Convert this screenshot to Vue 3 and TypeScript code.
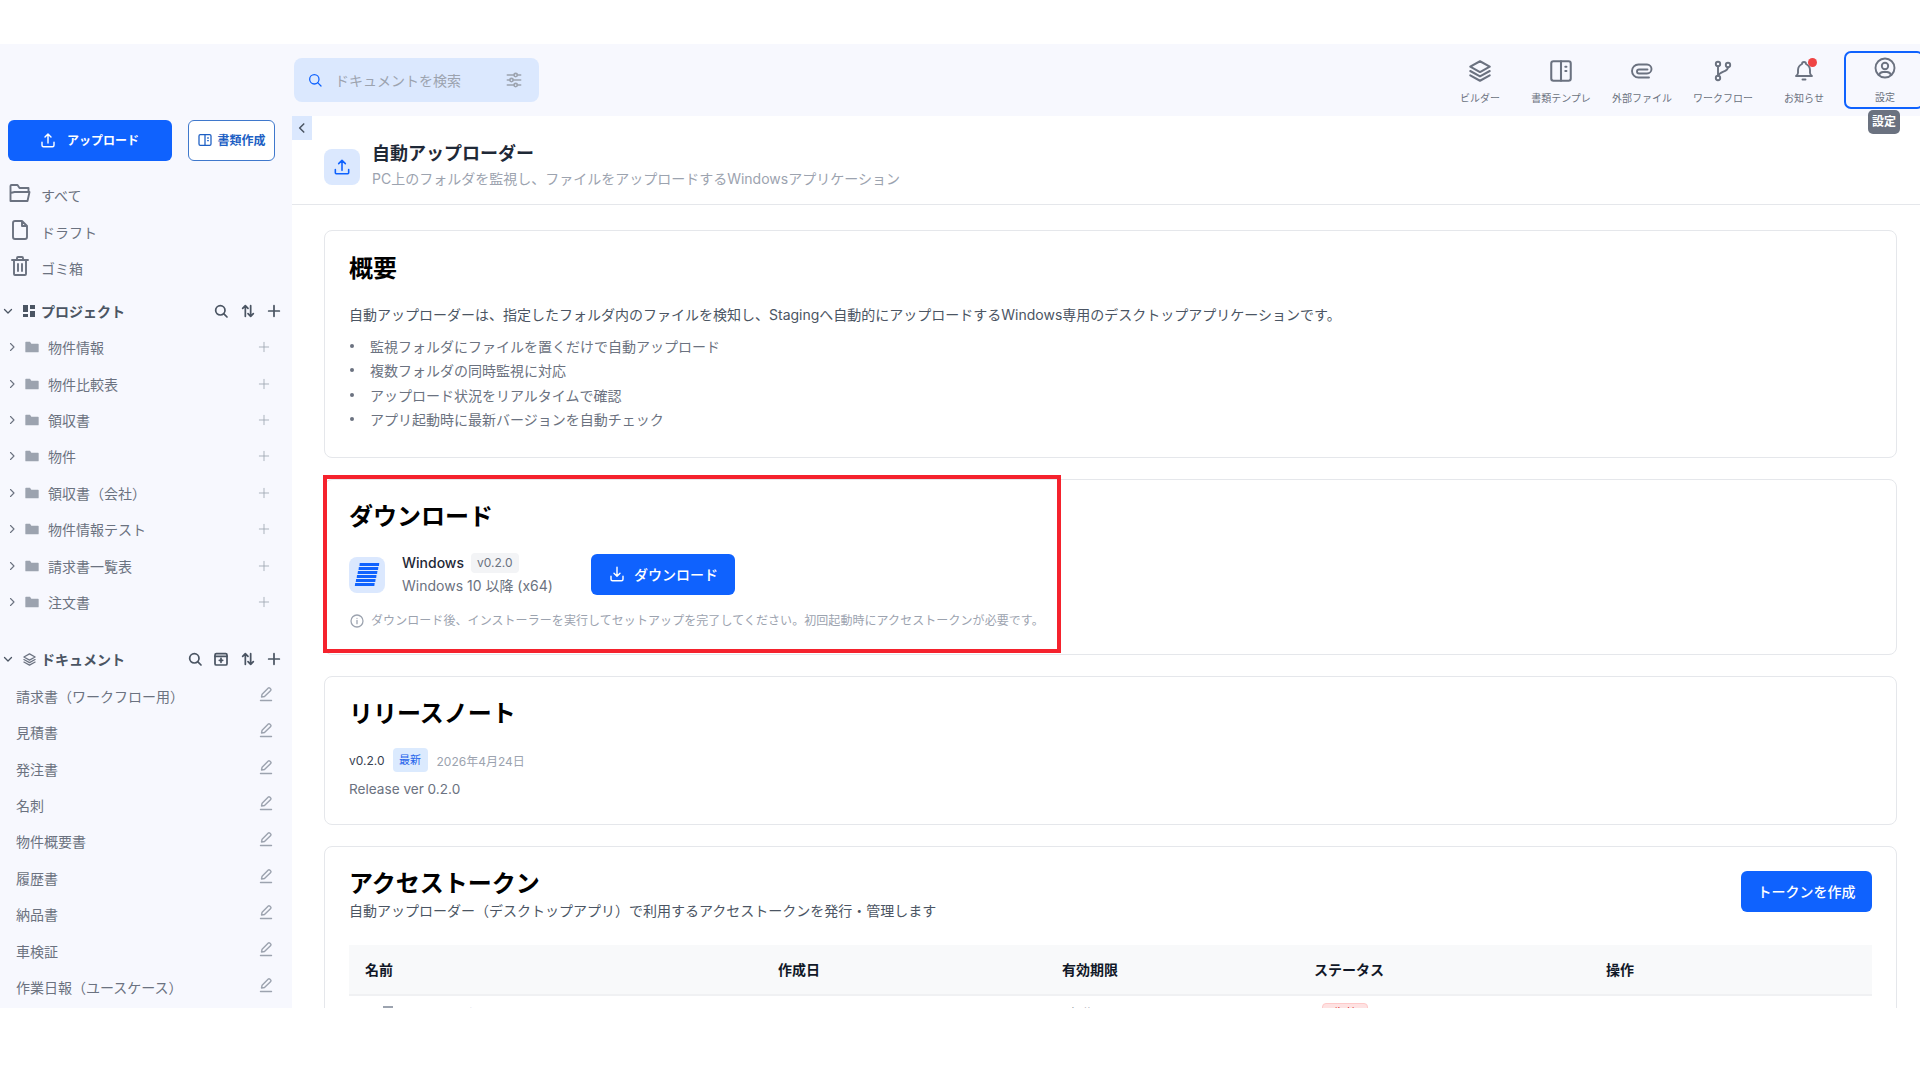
<script setup lang="ts">
const projects = ['物件情報', '物件比較表', '領収書', '物件', '領収書（会社）', '物件情報テスト', '請求書一覧表', '注文書']
const documents = ['請求書（ワークフロー用）', '見積書', '発注書', '名刺', '物件概要書', '履歴書', '納品書', '車検証', '作業日報（ユースケース）']
const features = [
  '監視フォルダにファイルを置くだけで自動アップロード',
  '複数フォルダの同時監視に対応',
  'アップロード状況をリアルタイムで確認',
  'アプリ起動時に最新バージョンを自動チェック',
]
const stripes = [0, 1, 2, 3, 4, 5]
</script>

<template>
  <div class="frame">
    <div class="app">
      <aside class="sidebar">
        <div class="actions">
          <button class="btn primary upload">
            <svg width="18" height="18" viewBox="0 0 24 24" class="ic"><path d="M4 15v4a2 2 0 0 0 2 2h12a2 2 0 0 0 2-2v-4M8 8l4-4 4 4M12 4v12" /></svg>
            アップロード
          </button>
          <button class="btn outline">
            <svg width="16" height="16" viewBox="0 0 24 24" class="ic"><rect x="3" y="4" width="18" height="16" rx="2" /><path d="M12 4v16M16 9h1M16 13h1" /></svg>
            書類作成
          </button>
        </div>

        <nav class="quick">
          <div class="quick-row">
            <svg width="24" height="24" viewBox="0 0 24 24" class="ic"><path d="M2.500 20V5a1 1 0 0 1 1-1h6l2 3h9v4M2.500 20h17l2-9H6.500L2.500 12" /></svg>
            <span>すべて</span>
          </div>
          <div class="quick-row">
            <svg width="24" height="24" viewBox="0 0 24 24" class="ic"><path d="M14 3v5h5M14 3H7a2 2 0 0 0-2 2v14a2 2 0 0 0 2 2h10a2 2 0 0 0 2-2V8z" /></svg>
            <span>ドラフト</span>
          </div>
          <div class="quick-row">
            <svg width="24" height="24" viewBox="0 0 24 24" class="ic"><path d="M4 6h16M9 6V4a1 1 0 0 1 1-1h4a1 1 0 0 1 1 1v2M6 6v14a1 1 0 0 0 1 1h10a1 1 0 0 0 1-1V6M10 10v7M14 10v7" /></svg>
            <span>ゴミ箱</span>
          </div>
        </nav>

        <div class="section-head projects">
          <svg width="12" height="12" viewBox="0 0 24 24" class="ic thick chev"><path d="M5 9l7 7 7-7" /></svg>
          <svg width="14" height="14" viewBox="0 0 14 14" class="solid"><rect x="1" y="1" width="5" height="7" /><rect x="8" y="1" width="5" height="4" /><rect x="1" y="10" width="5" height="3" /><rect x="8" y="7" width="5" height="6" /></svg>
          <span class="section-title">プロジェクト</span>
          <div class="tools">
            <svg width="16" height="16" viewBox="0 0 24 24" class="ic thick"><circle cx="11" cy="11" r="7" /><path d="M21 21l-5-5" /></svg>
            <svg width="16" height="16" viewBox="0 0 24 24" class="ic thick"><path d="M8 20V4M4 8l4-4 4 4M16 4v16M12 16l4 4 4-4" /></svg>
            <svg width="16" height="16" viewBox="0 0 24 24" class="ic thick"><path d="M12 4v16M4 12h16" /></svg>
          </div>
        </div>
        <div v-for="p in projects" :key="p" class="folder-row">
          <svg width="12" height="12" viewBox="0 0 24 24" class="ic thick chev-r"><path d="M9 5l7 7-7 7" /></svg>
          <svg width="16" height="16" viewBox="0 0 24 24" class="folder"><path d="M2 5a1 1 0 0 1 1-1h6l2 3h10a1 1 0 0 1 1 1v11a1 1 0 0 1-1 1H3a1 1 0 0 1-1-1z" /></svg>
          <span class="row-label">{{ p }}</span>
          <svg width="14" height="14" viewBox="0 0 24 24" class="ic light"><path d="M12 4v16M4 12h16" /></svg>
        </div>

        <div class="section-head documents">
          <svg width="12" height="12" viewBox="0 0 24 24" class="ic thick chev"><path d="M5 9l7 7 7-7" /></svg>
          <svg width="15" height="15" viewBox="0 0 24 24" class="ic stack"><path d="M12 3l9 5-9 5-9-5zM3 12l9 5 9-5M3 16l9 5 9-5" /></svg>
          <span class="section-title">ドキュメント</span>
          <div class="tools">
            <svg width="16" height="16" viewBox="0 0 24 24" class="ic thick"><circle cx="11" cy="11" r="7" /><path d="M21 21l-5-5" /></svg>
            <svg width="16" height="16" viewBox="0 0 24 24" class="ic thick"><rect x="3" y="4" width="18" height="17" rx="2" /><path d="M3 8h18M12 11v6M9.500 14h5" /></svg>
            <svg width="16" height="16" viewBox="0 0 24 24" class="ic thick"><path d="M8 20V4M4 8l4-4 4 4M16 4v16M12 16l4 4 4-4" /></svg>
            <svg width="16" height="16" viewBox="0 0 24 24" class="ic thick"><path d="M12 4v16M4 12h16" /></svg>
          </div>
        </div>
        <div v-for="d in documents" :key="d" class="doc-row">
          <span class="row-label">{{ d }}</span>
          <svg width="14" height="16" viewBox="0 0 14 16" class="ic light pen"><path d="M2.500 11l.6-2.800L9.300 2a1 1 0 0 1 1.400 0l1 1a1 1 0 0 1 0 1.400L5.500 10.500zM1.500 14.500h11" /></svg>
        </div>
      </aside>

      <header class="topbar">
        <div class="search">
          <svg width="16" height="16" viewBox="0 0 24 24" class="ic blue"><circle cx="11" cy="11" r="7" /><path d="M21 21l-5-5" /></svg>
          <span class="placeholder">ドキュメントを検索</span>
          <svg width="20" height="20" viewBox="0 0 24 24" class="ic grey filter"><circle cx="14" cy="6" r="2" /><path d="M4 6h8M16 6h4" /><circle cx="9" cy="12" r="2" /><path d="M4 12h3M11 12h9" /><circle cx="14" cy="18" r="2" /><path d="M4 18h8M16 18h4" /></svg>
        </div>
        <nav class="topnav">
          <div class="nav-item">
            <svg width="26" height="26" viewBox="0 0 24 24" class="ic big"><path d="M12 3l9 5-9 5-9-5zM3 12l9 5 9-5M3 16l9 5 9-5" /></svg>
            <span>ビルダー</span>
          </div>
          <div class="nav-item">
            <svg width="26" height="26" viewBox="0 0 24 24" class="ic big"><rect x="3" y="3" width="18" height="18" rx="2" /><path d="M12 3v18M16 8h1M16 12h1" /></svg>
            <span>書類テンプレ</span>
          </div>
          <div class="nav-item">
            <svg width="24" height="24" viewBox="0 0 24 24" class="ic"><path d="M19 18.500H8.500a6.500 6.500 0 0 1 0-13H17a4.500 4.500 0 0 1 0 9H9a2 2 0 0 1 0-4h8.500" /></svg>
            <span>外部ファイル</span>
          </div>
          <div class="nav-item">
            <svg width="24" height="24" viewBox="0 0 24 24" class="ic"><circle cx="7" cy="5" r="2.200" /><circle cx="7" cy="19" r="2.200" /><circle cx="17" cy="6" r="2.200" /><path d="M7 7.200v9.600M17 8.200c0 4.800-8 3.800-10 8.600" /></svg>
            <span>ワークフロー</span>
          </div>
          <div class="nav-item">
            <span class="bell">
              <svg width="24" height="24" viewBox="0 0 24 24" class="ic"><path d="M10 5a2 2 0 1 1 4 0 7 7 0 0 1 4 6v3a4 4 0 0 0 2 3H4a4 4 0 0 0 2-3v-3a7 7 0 0 1 4-6M10.500 20.500h3" /></svg>
              <i class="dot" />
            </span>
            <span>お知らせ</span>
          </div>
          <div class="nav-item active">
            <svg width="24" height="24" viewBox="0 0 24 24" class="ic"><circle cx="12" cy="12" r="9.500" /><circle cx="12" cy="10" r="3.200" /><path d="M6 19a4.500 4.500 0 0 1 4-3h4a4.500 4.500 0 0 1 4 3" /></svg>
            <span>設定</span>
            <div class="tooltip">設定</div>
          </div>
        </nav>
      </header>

      <main class="main">
        <button class="collapse">
          <svg width="14" height="14" viewBox="0 0 24 24" class="ic thick"><path d="M15 5l-7 7 7 7" /></svg>
        </button>
        <div class="page-head">
          <div class="page-icon">
            <svg width="20" height="20" viewBox="0 0 24 24" class="ic blue"><path d="M4 15v4a1 1 0 0 0 1 1h14a1 1 0 0 0 1-1v-4M8 8l4-4 4 4M12 4v12" /></svg>
          </div>
          <div class="page-text">
            <h1>自動アップローダー</h1>
            <p>PC上のフォルダを監視し、ファイルをアップロードするWindowsアプリケーション</p>
          </div>
        </div>

        <div class="content">
          <section class="card overview">
            <h2>概要</h2>
            <p class="lead">自動アップローダーは、指定したフォルダ内のファイルを検知し、Stagingへ自動的にアップロードするWindows専用のデスクトップアプリケーションです。</p>
            <ul>
              <li v-for="f in features" :key="f">{{ f }}</li>
            </ul>
          </section>

          <section class="card download">
            <h2>ダウンロード</h2>
            <div class="dl-row">
              <div class="win-icon">
                <svg width="26" height="26" viewBox="0 0 26 26">
                  <rect v-for="s in stripes" :key="s" :x="4.500 - s * 0.500" :y="1 + s * 4" width="19.500" height="3" transform="skewX(-6)" transform-origin="13 13" fill="#0f62fe" />
                </svg>
              </div>
              <div class="win-info">
                <div class="win-name"><strong>Windows</strong><span class="ver">v0.2.0</span></div>
                <div class="win-req">Windows 10 以降 (x64)</div>
              </div>
              <button class="btn primary dl-btn">
                <svg width="18" height="18" viewBox="0 0 24 24" class="ic"><path d="M4 15v4a2 2 0 0 0 2 2h12a2 2 0 0 0 2-2v-4M8 11l4 4 4-4M12 3v12" /></svg>
                ダウンロード
              </button>
            </div>
            <div class="note">
              <svg width="16" height="16" viewBox="0 0 24 24" class="ic grey"><circle cx="12" cy="12" r="9" /><path d="M12 11v5M12 8v.01" /></svg>
              ダウンロード後、インストーラーを実行してセットアップを完了してください。初回起動時にアクセストークンが必要です。
            </div>
          </section>

          <section class="card notes">
            <h2>リリースノート</h2>
            <div class="rel-line"><span class="rel-ver">v0.2.0</span><span class="latest">最新</span><span class="rel-date">2026年4月24日</span></div>
            <p class="rel-text">Release ver 0.2.0</p>
          </section>

          <section class="card tokens">
            <div class="token-head">
              <div>
                <h2>アクセストークン</h2>
                <p class="lead">自動アップローダー（デスクトップアプリ）で利用するアクセストークンを発行・管理します</p>
              </div>
              <button class="btn primary">トークンを作成</button>
            </div>
            <table>
              <thead>
                <tr><th class="c1">名前</th><th class="c2">作成日</th><th class="c3">有効期限</th><th class="c4">ステータス</th><th>操作</th></tr>
              </thead>
              <tbody>
                <tr>
                  <td class="name-cell"><span class="key" />PC用トークン</td>
                  <td class="date-cell">2026/04/24</td>
                  <td class="limit-cell">無期限</td>
                  <td><span class="revoked">失効</span></td>
                  <td />
                </tr>
              </tbody>
            </table>
          </section>
        </div>
      </main>
    </div>
    <!-- レビュー用の赤枠 -->
    <div class="annotation" />
  </div>
</template>

<style>
html, body {
  margin: 0;
  background: #fff;
}
</style>

<style scoped>
* {
  box-sizing: border-box;
}

.frame {
  position: relative;
  width: 1920px;
  height: 1080px;
  padding-top: 44px;
  background: #fff;
  overflow: hidden;
  font-family: Inter, "Noto Sans CJK JP", sans-serif;
  color: #4b5563;
}

.app {
  display: grid;
  grid-template-columns: 292px 1fr;
  grid-template-rows: 72px 1fr;
  height: 964px;
  background: #f7f8fe;
  overflow: hidden;
}

.ic {
  fill: none;
  stroke: currentColor;
  stroke-width: 1.9;
  stroke-linecap: round;
  stroke-linejoin: round;
  flex: none;
}

.ic.big {
  margin: -1px;
}

.ic.thick {
  stroke-width: 2.600;
  color: #4b5563;
}

.ic.light {
  color: #9ca3af;
  stroke-width: 1.400;
}

.ic.grey {
  color: #9ca3af;
}

.ic.blue {
  color: #0f62fe;
}

.ic.stack {
  color: #6b7280;
}

.btn {
  display: inline-flex;
  align-items: center;
  justify-content: center;
  border-radius: 6px;
  font-family: inherit;
  font-size: 14px;
  font-weight: 500;
  height: 41px;
  border: 1px solid transparent;
}

.btn.primary {
  background: #0f62fe;
  color: #fff;
  padding: 0 16px 2px;
}

.btn.outline {
  background: #fff;
  color: #1d5fc4;
  border-color: #3f78cc;
  font-size: 12px;
  font-weight: 700;
  gap: 4px;
  padding: 0 0 2px;
  width: 87px;
}

/* sidebar */
.sidebar {
  grid-row: 1 / 3;
  padding-top: 76px;
  overflow: hidden;
}

.actions {
  display: flex;
  gap: 16px;
  padding-left: 8px;
}

.btn.primary.upload {
  width: 164px;
  gap: 10px;
  padding: 0 2px 2px 0;
  font-size: 12px;
  font-weight: 700;
}

.quick {
  padding: 14px 0 0 8px;
}

.quick-row {
  display: flex;
  align-items: center;
  gap: 9px;
  height: 36.500px;
  font-size: 14px;
  color: #6b7280;
}

.quick-row span {
  padding-top: 4px;
}

.section-head {
  display: flex;
  align-items: center;
  height: 36px;
}

.section-head.projects {
  margin-top: 9px;
  height: 35.500px;
}

.section-head.documents {
  margin-top: 20.500px;
  height: 37px;
}

.chev {
  margin: 0 8px 0 2px;
}

.solid {
  fill: #4b5563;
  flex: none;
}

.section-title {
  margin-left: 5px;
  font-size: 14px;
  font-weight: 700;
  color: #4b5563;
}

.documents .section-title {
  margin-left: 4px;
}

.tools {
  margin-left: auto;
  display: flex;
  gap: 10.500px;
  padding-right: 10px;
}

.folder-row,
.doc-row {
  display: flex;
  align-items: center;
  height: 36.400px;
  font-size: 14px;
  color: #6b7280;
}

.folder-row {
  padding-left: 6px;
}

.folder-row .chev-r {
  color: #6b7280;
  stroke-width: 2.200;
}

.folder {
  margin-left: 6px;
  fill: #9ca3af;
  flex: none;
}

.row-label {
  flex: 1;
  margin-left: 8px;
}

.doc-row .row-label {
  margin-left: 9px;
}

.folder-row .light {
  margin-right: 21px;
}

.doc-row {
  padding-left: 7px;
}

.pen {
  margin: -4px 19px 0 0;
}

/* top bar */
.topbar {
  display: flex;
  align-items: center;
  justify-content: space-between;
  padding-left: 2px;
}

.search {
  display: flex;
  align-items: center;
  width: 245px;
  height: 44px;
  padding: 0 15px 0 13px;
  border-radius: 8px;
  background: #dbe8fe;
  gap: 12px;
}

.placeholder {
  font-size: 14px;
  color: #9ca3af;
  flex: 1;
}

.topnav {
  display: flex;
  gap: 1px;
  margin-right: -4px;
}

.nav-item {
  position: relative;
  width: 80px;
  height: 58px;
  display: flex;
  flex-direction: column;
  align-items: center;
  padding: 5.500px 0 0 2px;
  gap: 8.500px;
  font-size: 10px;
  line-height: 14px;
  color: #6b7280;
  border-radius: 7px;
  border: 2px solid transparent;
}

.nav-item.active {
  border-color: #0f62fe;
  padding-top: 3px;
  gap: 10px;
}

.bell {
  position: relative;
  display: block;
  height: 24px;
}

.dot {
  position: absolute;
  top: -1px;
  right: -1px;
  width: 9px;
  height: 9px;
  border-radius: 50%;
  background: #ef4444;
}

.tooltip {
  position: absolute;
  top: 57px;
  left: 22px;
  padding: 0 4px;
  height: 24px;
  line-height: 24px;
  border-radius: 5px;
  background: #6b7280;
  color: #fff;
  font-size: 12px;
  font-weight: 700;
  z-index: 3;
}

/* main */
.main {
  position: relative;
  background: #fff;
  overflow: hidden;
}

.collapse {
  position: absolute;
  top: 0;
  left: 0;
  width: 20px;
  height: 24px;
  padding: 0;
  border: 0;
  background: #dbe8fe;
  display: flex;
  align-items: center;
  justify-content: center;
}

.page-head {
  display: flex;
  align-items: center;
  gap: 12px;
  height: 89px;
  padding: 13px 32px 0;
  border-bottom: 1px solid #e5e7eb;
}

.page-text {
  margin-top: -3px;
}

.page-icon {
  width: 36px;
  height: 36px;
  border-radius: 8px;
  background: #dbe8fe;
  display: flex;
  align-items: center;
  justify-content: center;
}

h1 {
  margin: 0 0 1.500px;
  font-size: 18px;
  line-height: 26px;
  font-weight: 600;
  color: #1f2937;
}

.page-head p {
  margin: 0;
  font-size: 14px;
  line-height: 20px;
  color: #9ca3af;
}

.content {
  display: flex;
  flex-direction: column;
  gap: 20px;
  padding: 25px 23px 0 32px;
}

.card {
  flex: none;
  border: 1px solid #e5e7eb;
  border-radius: 8px;
  padding: 20px 24px;
  background: #fff;
}

h2 {
  margin: 0;
  font-size: 24px;
  line-height: 36px;
  font-weight: 700;
  color: #000;
}

.overview {
  height: 228px;
  margin-bottom: 1px;
}

.lead {
  margin: 0;
  font-size: 14px;
  line-height: 20px;
  color: #4b5563;
}

.overview .lead {
  margin-top: 18px;
}

ul {
  list-style: none;
  margin: 8.500px 0 0;
  padding: 0;
}

li {
  display: flex;
  align-items: center;
  gap: 16px;
  height: 24.500px;
  font-size: 14px;
  color: #6b7280;
}

li::before {
  content: "";
  width: 4px;
  height: 4px;
  margin-left: 1px;
  border-radius: 50%;
  background: #6b7280;
}

.download {
  height: 176px;
  margin-bottom: 1px;
  padding-top: 19px;
}

.dl-row {
  display: flex;
  align-items: center;
  margin-top: 17px;
}

.win-icon {
  width: 36px;
  height: 36px;
  border-radius: 8px;
  background: #dbe8fe;
  display: flex;
  align-items: center;
  justify-content: center;
}

.win-info {
  margin-left: 17px;
  width: 189px;
}

.win-name {
  display: flex;
  align-items: center;
  gap: 7px;
  height: 21px;
  font-size: 14px;
  color: #1f2937;
}

.win-name strong {
  font-weight: 500;
}

.ver {
  padding: 0 6px;
  height: 20px;
  line-height: 20px;
  border-radius: 4px;
  background: #f3f4f6;
  color: #6b7280;
  font-size: 12px;
}

.win-req {
  margin-top: 2px;
  font-size: 14px;
  line-height: 22px;
  color: #6b7280;
}

.dl-btn {
  width: 144px;
  gap: 8px;
}

.note {
  display: flex;
  align-items: center;
  gap: 6px;
  margin-top: 15px;
  font-size: 12px;
  line-height: 18px;
  letter-spacing: 0.070px;
  color: #9ca3af;
}

.notes {
  height: 149px;
  margin-bottom: 1px;
  padding-top: 19px;
}

.rel-line {
  display: flex;
  align-items: center;
  margin-top: 16px;
  font-size: 12px;
  height: 24px;
}

.rel-ver {
  color: #374151;
}

.latest {
  margin: 0 9px 0 8px;
  padding: 0 6.500px;
  line-height: 24px;
  border-radius: 4px;
  background: #dbeafe;
  color: #2563eb;
  font-size: 11px;
}

.rel-date {
  color: #9ca3af;
}

.rel-text {
  margin: 7px 0 0;
  font-size: 13.600px;
  line-height: 20px;
  color: #6b7280;
}

.tokens {
  padding-top: 19px;
}

.token-head {
  display: flex;
  justify-content: space-between;
  align-items: flex-start;
}

.token-head .lead {
  margin-top: -1px;
}

.token-head .btn {
  width: 131px;
  margin-top: 5px;
  padding: 0 0 2px;
}

table {
  width: 100%;
  margin-top: 24px;
  border-collapse: collapse;
  table-layout: fixed;
  font-size: 14px;
}

th {
  height: 50px;
  padding: 0 16px 2px;
  text-align: left;
  font-weight: 700;
  color: #111827;
  background: #f8f9fa;
  border-bottom: 2px solid #f0f1f3;
}

.c1 { width: 413px; }
.c2 { width: 284px; }
.c3 { width: 252px; }
.c4 { width: 292px; }

td {
  padding: 7px 16px;
  color: #6b7280;
  vertical-align: top;
}

.name-cell {
  padding-left: 54px;
  position: relative;
}

.key {
  position: absolute;
  left: 34px;
  top: 10px;
  width: 10px;
  height: 14px;
  background: #9ca3af;
}

.date-cell {
  padding-top: 16px;
}

.limit-cell {
  padding-left: 23px;
}

.revoked {
  display: inline-block;
  margin-left: 8px;
  padding: 0 10px;
  border: 1px solid #fecaca;
  border-radius: 4px;
  background: #fee2e2;
  color: #dc2626;
  font-size: 12px;
}

.annotation {
  position: absolute;
  left: 323px;
  top: 475px;
  width: 738px;
  height: 178px;
  border: 4px solid #f5222d;
  pointer-events: none;
}
</style>
